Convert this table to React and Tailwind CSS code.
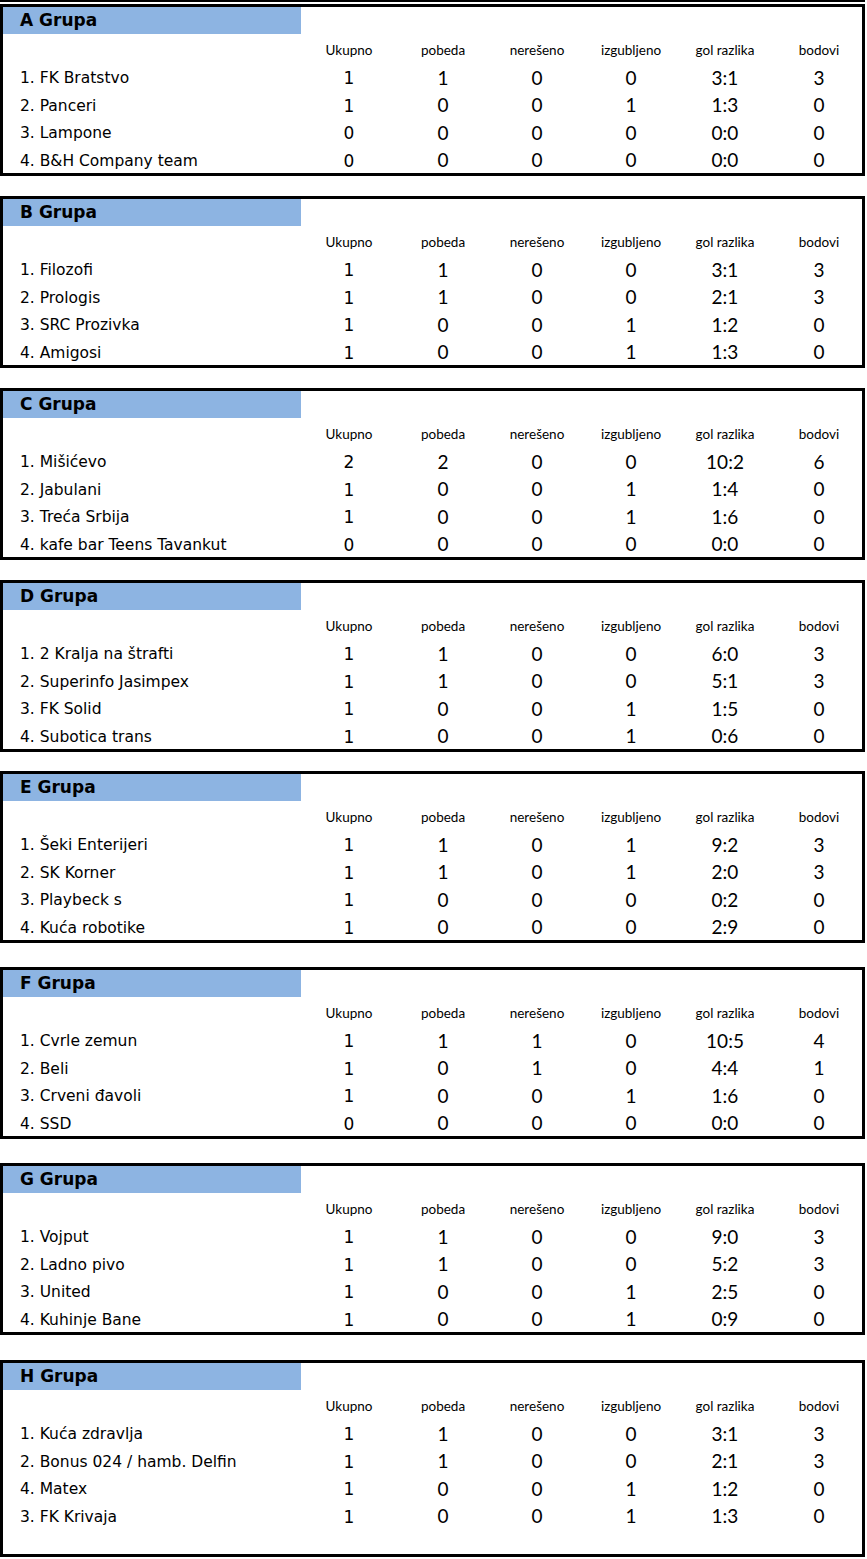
const groups = [
  { name: 'A Grupa', mt: 'mt-[2px]', rows: [
    ['1. FK Bratstvo', 1, 1, 0, 0, '3:1', 3],
    ['2. Panceri', 1, 0, 0, 1, '1:3', 0],
    ['3. Lampone', 0, 0, 0, 0, '0:0', 0],
    ['4. B&H Company team', 0, 0, 0, 0, '0:0', 0],
  ] },
  { name: 'B Grupa', mt: 'mt-[20px]', rows: [
    ['1. Filozofi', 1, 1, 0, 0, '3:1', 3],
    ['2. Prologis', 1, 1, 0, 0, '2:1', 3],
    ['3. SRC Prozivka', 1, 0, 0, 1, '1:2', 0],
    ['4. Amigosi', 1, 0, 0, 1, '1:3', 0],
  ] },
  { name: 'C Grupa', mt: 'mt-[20px]', rows: [
    ['1. Mišićevo', 2, 2, 0, 0, '10:2', 6],
    ['2. Jabulani', 1, 0, 0, 1, '1:4', 0],
    ['3. Treća Srbija', 1, 0, 0, 1, '1:6', 0],
    ['4. kafe bar Teens Tavankut', 0, 0, 0, 0, '0:0', 0],
  ] },
  { name: 'D Grupa', mt: 'mt-[20px]', rows: [
    ['1. 2 Kralja na štrafti', 1, 1, 0, 0, '6:0', 3],
    ['2. Superinfo Jasimpex', 1, 1, 0, 0, '5:1', 3],
    ['3. FK Solid', 1, 0, 0, 1, '1:5', 0],
    ['4. Subotica trans', 1, 0, 0, 1, '0:6', 0],
  ] },
  { name: 'E Grupa', mt: 'mt-[19px]', rows: [
    ['1. Šeki Enterijeri', 1, 1, 0, 1, '9:2', 3],
    ['2. SK Korner', 1, 1, 0, 1, '2:0', 3],
    ['3. Playbeck s', 1, 0, 0, 0, '0:2', 0],
    ['4. Kuća robotike', 1, 0, 0, 0, '2:9', 0],
  ] },
  { name: 'F Grupa', mt: 'mt-[24px]', rows: [
    ['1. Cvrle zemun', 1, 1, 1, 0, '10:5', 4],
    ['2. Beli', 1, 0, 1, 0, '4:4', 1],
    ['3. Crveni đavoli', 1, 0, 0, 1, '1:6', 0],
    ['4. SSD', 0, 0, 0, 0, '0:0', 0],
  ] },
  { name: 'G Grupa', mt: 'mt-[24px]', rows: [
    ['1. Vojput', 1, 1, 0, 0, '9:0', 3],
    ['2. Ladno pivo', 1, 1, 0, 0, '5:2', 3],
    ['3. United', 1, 0, 0, 1, '2:5', 0],
    ['4. Kuhinje Bane', 1, 0, 0, 1, '0:9', 0],
  ] },
  { name: 'H Grupa', mt: 'mt-[25px]', pad: 'pb-[25px]', rows: [
    ['1. Kuća zdravlja', 1, 1, 0, 0, '3:1', 3],
    ['2. Bonus 024 / hamb. Delfin', 1, 1, 0, 0, '2:1', 3],
    ['4. Matex', 1, 0, 0, 1, '1:2', 0],
    ['3. FK Krivaja', 1, 0, 0, 1, '1:3', 0],
  ] },
];

const labels = ['Ukupno', 'pobeda', 'nerešeno', 'izgubljeno', 'gol razlika', 'bodovi'];
const grid = 'grid grid-cols-[299px_repeat(6,94px)]';

function GroupTable({ group }) {
  return (
    <section className={`${group.mt} w-[865px] border-[3px] border-black bg-white ${group.pad || ''}`}>
      <div className="h-[27px] w-[298px] bg-[#8db4e2] flex items-center pl-[17px] font-['Verdana','DejaVu_Sans',sans-serif] text-[17px] font-bold">
        {group.name}
      </div>
      <div className={`${grid} h-[29px] pt-[4px] items-center font-['Lato',sans-serif] text-[13.5px]`}>
        <div />
        {labels.map((l) => (
          <div key={l} className="text-center">{l}</div>
        ))}
      </div>
      {group.rows.map(([team, ...nums]) => (
        <div key={team} className={`${grid} h-[27.5px] items-center`}>
          <div className="pl-[17px] pt-[4px] leading-none font-['Verdana','DejaVu_Sans',sans-serif] text-[15.5px] whitespace-nowrap">{team}</div>
          {nums.map((n, i) => (
            <div
              key={i}
              className={`text-center leading-none ${i === 0 ? "font-['DejaVu_Sans',sans-serif] text-[17px] pt-[4px]" : "font-['Lato',sans-serif] text-[19px] pt-[1px]"}`}
            >
              {n}
            </div>
          ))}
        </div>
      ))}
    </section>
  );
}

export default function App() {
  return (
    <div className="w-[867px] min-h-[1559px] bg-white text-black overflow-hidden">
      <div className="h-[2px] w-[865px] bg-black" />
      {groups.map((g) => (
        <GroupTable key={g.name} group={g} />
      ))}
    </div>
  );
}
